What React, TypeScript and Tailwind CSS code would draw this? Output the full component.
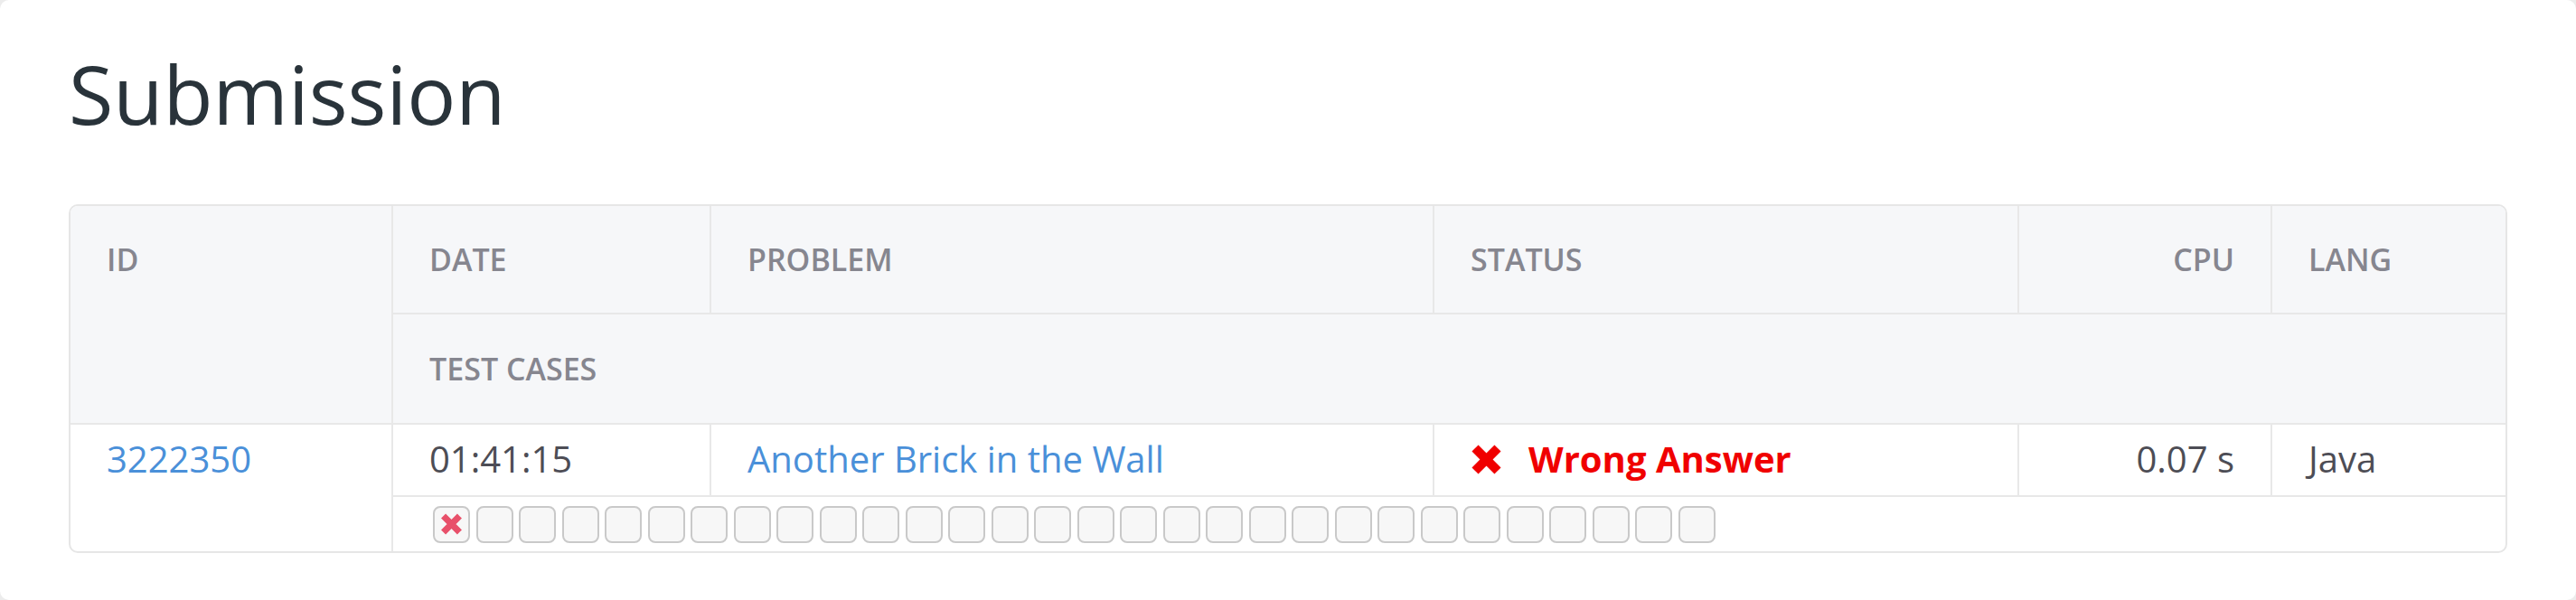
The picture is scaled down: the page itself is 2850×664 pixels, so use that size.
import React from 'react';

const testCases: ('wrong' | 'none')[] = ['wrong', ...Array(29).fill('none')];

function CrossIcon({ className, strokeWidth }: { className?: string; strokeWidth: number }) {
    return (
        <svg viewBox="0 0 35 33" className={className} fill="none" stroke="currentColor" strokeWidth={strokeWidth}>
            <path d="M5 4L30 29M30 4L5 29" strokeLinecap="butt" />
        </svg>
    );
}

export default function App() {
    const head = "px-[40px] text-[34px] leading-[48px] font-semibold text-[#86868f] uppercase";
    const cell = "px-[40px] pt-[10px] pb-[12px] text-[40px] leading-[56px]";

    return (
        <div className="min-h-screen bg-[#ececec] font-['Open_Sans',sans-serif]">
            <div className="h-[664px] bg-white rounded-[10px] px-[76px] pt-[54px]">
                <h1 className="text-[90px] leading-[99px] text-[#29333a] font-normal">Submission</h1>

                <div className="mt-[73px] border-2 border-[#e6e6e6] rounded-[10px] overflow-hidden grid grid-cols-[355px_352px_800px_647px_280px_261px]">
                    {/* header */}
                    <div className={`${head} row-span-2 bg-[#f6f7f9] py-[35px] border-b-2 border-[#e8e8e8]`}>ID</div>
                    <div className={`${head} bg-[#f6f7f9] py-[35px] border-l-2 border-b-2 border-[#e8e8e8]`}>Date</div>
                    <div className={`${head} bg-[#f6f7f9] py-[35px] border-l-2 border-b-2 border-[#e8e8e8]`}>Problem</div>
                    <div className={`${head} bg-[#f6f7f9] py-[35px] border-l-2 border-b-2 border-[#e8e8e8]`}>Status</div>
                    <div className={`${head} bg-[#f6f7f9] py-[35px] border-l-2 border-b-2 border-[#e8e8e8] text-right`}>CPU</div>
                    <div className={`${head} bg-[#f6f7f9] py-[35px] border-l-2 border-b-2 border-[#e8e8e8]`}>Lang</div>
                    <div className={`${head} col-span-5 bg-[#f6f7f9] py-[36px] border-l-2 border-b-2 border-[#e8e8e8]`}>Test cases</div>

                    {/* row */}
                    <div className={`${cell} row-span-2 text-[#4a90d9]`}>
                        <a href="#">3222350</a>
                    </div>
                    <div className={`${cell} border-l-2 border-b-2 border-[#e8e8e8] text-[#4d4d55]`}>01:41:15</div>
                    <div className={`${cell} border-l-2 border-b-2 border-[#e8e8e8] text-[#4a90d9]`}>
                        <a href="#">Another Brick in the Wall</a>
                    </div>
                    <div className={`${cell} border-l-2 border-b-2 border-[#e8e8e8] flex items-center gap-[29px] text-[#f00000] font-bold`}>
                        <CrossIcon className="w-[35px] h-[33px] shrink-0" strokeWidth={10} />
                        <span>Wrong Answer</span>
                    </div>
                    <div className={`${cell} border-l-2 border-b-2 border-[#e8e8e8] text-right text-[#4d4d55]`}>0.07 s</div>
                    <div className={`${cell} border-l-2 border-b-2 border-[#e8e8e8] text-[#4d4d55]`}>Java</div>
                    <div className="col-span-5 h-[60px] border-l-2 border-[#e8e8e8] pl-[44px] flex items-center gap-[6.5px]">
                        {testCases.map((tc, i) => (
                            <div
                                key={i}
                                className="w-[41px] h-[41px] rounded-[8px] border-2 border-[#c9c9c9] bg-[#f7f7f7] flex items-center justify-center text-[#e8506a]"
                            >
                                {tc === 'wrong' && <CrossIcon className="w-[25px] h-[24px]" strokeWidth={10} />}
                            </div>
                        ))}
                    </div>
                </div>
            </div>
        </div>
    );
}
